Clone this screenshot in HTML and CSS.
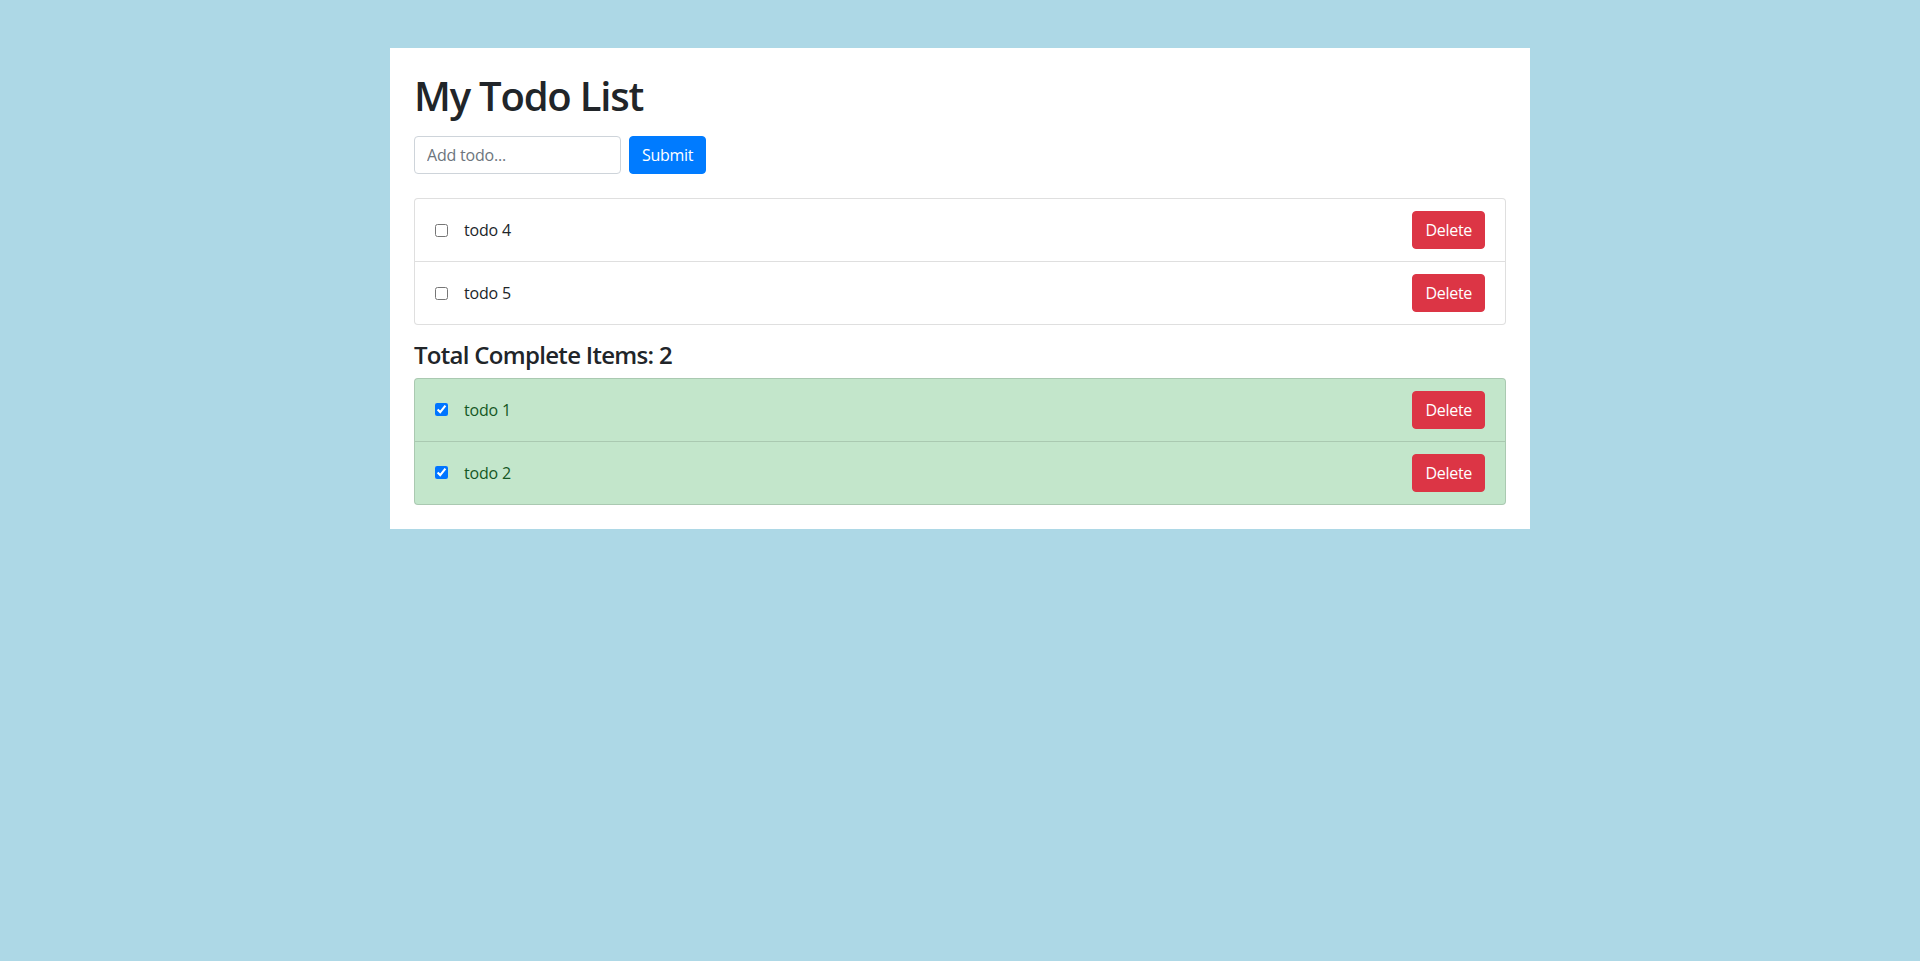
FILE: index.html
```html
<!DOCTYPE html>
<html lang="en">
<head>
<meta charset="utf-8">
<title>My Todo List</title>
<link rel="stylesheet" href="styles.css">
</head>
<body>
<main class="container">
  <h1 class="title">My Todo List</h1>
  <form class="add-form" onsubmit="return false">
    <input class="form-control" type="text" placeholder="Add todo...">
    <button class="btn btn-primary" type="submit">Submit</button>
  </form>
  <ul class="list-group">
    <li class="list-item">
      <label class="item-label"><input type="checkbox" class="check"><span>todo 4</span></label>
      <button class="btn btn-danger" type="button">Delete</button>
    </li>
    <li class="list-item">
      <label class="item-label"><input type="checkbox" class="check"><span>todo 5</span></label>
      <button class="btn btn-danger" type="button">Delete</button>
    </li>
  </ul>
  <h4 class="subtitle">Total Complete Items: 2</h4>
  <ul class="list-group">
    <li class="list-item success">
      <label class="item-label"><input type="checkbox" class="check" checked><span>todo 1</span></label>
      <button class="btn btn-danger" type="button">Delete</button>
    </li>
    <li class="list-item success">
      <label class="item-label"><input type="checkbox" class="check" checked><span>todo 2</span></label>
      <button class="btn btn-danger" type="button">Delete</button>
    </li>
  </ul>
</main>
</body>
</html>
```
FILE: styles.css
```css
* { box-sizing: border-box; }
html, body { margin: 0; }
body {
  background: #add8e6;
  font-family: "Open Sans", "Noto Sans", sans-serif;
  font-size: 16px;
  line-height: 1.5;
  color: #212529;
  padding-top: 48px;
  min-height: 961px;
}
.container {
  width: 1140px;
  margin: 0 auto;
  background: #fff;
  padding: 24px;
}
.title {
  margin: 0 0 16px;
  font-size: 40px;
  font-weight: 600;
  letter-spacing: -1.2px;
  line-height: 1.2;
}
.add-form {
  display: flex;
  gap: 8px;
  margin: 0 0 24px;
}
.form-control {
  width: 207px;
  height: 38px;
  padding: 6px 12px;
  font: inherit;
  letter-spacing: -0.2px;
  color: #495057;
  border: 1px solid #ced4da;
  border-radius: 4px;
  background: #fff;
}
.form-control::placeholder { color: #6c757d; }
.btn {
  font: inherit;
  letter-spacing: -0.3px;
  height: 38px;
  padding: 6px 12px;
  border: 1px solid transparent;
  border-radius: 4px;
  color: #fff;
  cursor: pointer;
  line-height: 1.5;
}
.btn-primary { background: #007bff; border-color: #007bff; }
.btn-danger { background: #dc3545; border-color: #dc3545; }
.list-group {
  list-style: none;
  margin: 0;
  padding: 0;
  display: flex;
  flex-direction: column;
}
.list-item {
  display: flex;
  align-items: center;
  justify-content: space-between;
  padding: 12px 20px;
  border: 1px solid rgba(0,0,0,.125);
  background: #fff;
}
.list-item + .list-item { border-top-width: 0; }
.list-item:first-child { border-top-left-radius: 4px; border-top-right-radius: 4px; }
.list-item:last-child { border-bottom-left-radius: 4px; border-bottom-right-radius: 4px; }
.list-item.success { background: #c3e6cb; color: #155724; }
.item-label {
  display: flex;
  align-items: center;
  letter-spacing: -0.2px;
}
.check {
  width: 13px;
  height: 13px;
  margin: 0 16px 0 0;
}
.subtitle {
  margin: 16px 0 8px;
  font-size: 24px;
  font-weight: 600;
  letter-spacing: -0.7px;
  line-height: 1.2;
}
```
